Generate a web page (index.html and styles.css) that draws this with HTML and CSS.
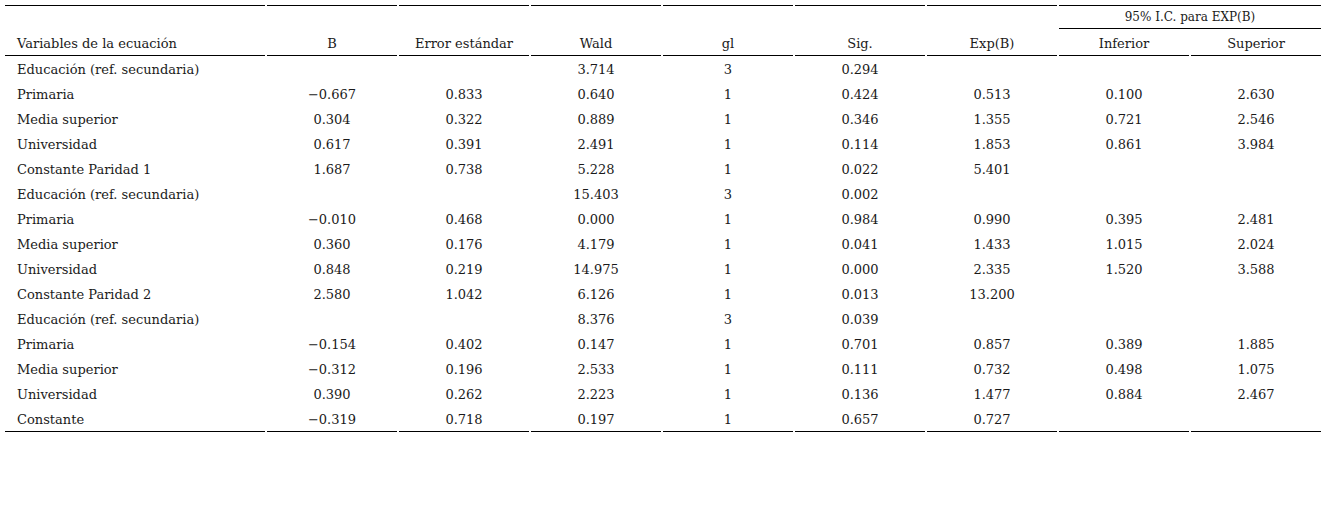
FILE: index.html
```html
<!DOCTYPE html>
<html lang="es">
<head>
<meta charset="utf-8">
<title>Variables de la ecuación</title>
<link rel="stylesheet" href="styles.css">
</head>
<body>
<table class="tbl">
  <colgroup>
    <col class="c-first">
    <col class="c-num"><col class="c-num"><col class="c-num"><col class="c-num">
    <col class="c-num"><col class="c-num"><col class="c-num"><col class="c-num">
  </colgroup>
  <thead>
    <tr class="h1">
      <th class="top"></th><th class="top"></th><th class="top"></th><th class="top"></th>
      <th class="top"></th><th class="top"></th><th class="top"></th>
      <th class="top span" colspan="2">95% I.C. para EXP(B)</th>
    </tr>
    <tr class="h2">
      <th class="lbl">Variables de la ecuación</th>
      <th>B</th><th>Error estándar</th><th>Wald</th><th>gl</th><th>Sig.</th><th>Exp(B)</th>
      <th class="sub">Inferior</th><th class="sub">Superior</th>
    </tr>
  </thead>
  <tbody>
    <tr><td class="lbl">Educación (ref. secundaria)</td><td></td><td></td><td>3.714</td><td>3</td><td>0.294</td><td></td><td></td><td></td></tr>
    <tr><td class="lbl">Primaria</td><td>−0.667</td><td>0.833</td><td>0.640</td><td>1</td><td>0.424</td><td>0.513</td><td>0.100</td><td>2.630</td></tr>
    <tr><td class="lbl">Media superior</td><td>0.304</td><td>0.322</td><td>0.889</td><td>1</td><td>0.346</td><td>1.355</td><td>0.721</td><td>2.546</td></tr>
    <tr><td class="lbl">Universidad</td><td>0.617</td><td>0.391</td><td>2.491</td><td>1</td><td>0.114</td><td>1.853</td><td>0.861</td><td>3.984</td></tr>
    <tr><td class="lbl">Constante Paridad 1</td><td>1.687</td><td>0.738</td><td>5.228</td><td>1</td><td>0.022</td><td>5.401</td><td></td><td></td></tr>
    <tr><td class="lbl">Educación (ref. secundaria)</td><td></td><td></td><td>15.403</td><td>3</td><td>0.002</td><td></td><td></td><td></td></tr>
    <tr><td class="lbl">Primaria</td><td>−0.010</td><td>0.468</td><td>0.000</td><td>1</td><td>0.984</td><td>0.990</td><td>0.395</td><td>2.481</td></tr>
    <tr><td class="lbl">Media superior</td><td>0.360</td><td>0.176</td><td>4.179</td><td>1</td><td>0.041</td><td>1.433</td><td>1.015</td><td>2.024</td></tr>
    <tr><td class="lbl">Universidad</td><td>0.848</td><td>0.219</td><td>14.975</td><td>1</td><td>0.000</td><td>2.335</td><td>1.520</td><td>3.588</td></tr>
    <tr><td class="lbl">Constante Paridad 2</td><td>2.580</td><td>1.042</td><td>6.126</td><td>1</td><td>0.013</td><td>13.200</td><td></td><td></td></tr>
    <tr><td class="lbl">Educación (ref. secundaria)</td><td></td><td></td><td>8.376</td><td>3</td><td>0.039</td><td></td><td></td><td></td></tr>
    <tr><td class="lbl">Primaria</td><td>−0.154</td><td>0.402</td><td>0.147</td><td>1</td><td>0.701</td><td>0.857</td><td>0.389</td><td>1.885</td></tr>
    <tr><td class="lbl">Media superior</td><td>−0.312</td><td>0.196</td><td>2.533</td><td>1</td><td>0.111</td><td>0.732</td><td>0.498</td><td>1.075</td></tr>
    <tr><td class="lbl">Universidad</td><td>0.390</td><td>0.262</td><td>2.223</td><td>1</td><td>0.136</td><td>1.477</td><td>0.884</td><td>2.467</td></tr>
    <tr class="last"><td class="lbl">Constante</td><td>−0.319</td><td>0.718</td><td>0.197</td><td>1</td><td>0.657</td><td>0.727</td><td></td><td></td></tr>
  </tbody>
</table>
</body>
</html>
```
FILE: styles.css
```css
html, body {
  margin: 0;
  padding: 0;
  background: #fff;
}
body {
  font-family: "DejaVu Serif", "Liberation Serif", serif;
  font-size: 13px;
  color: #1a1a1a;
}
.tbl {
  margin: 5px 0 0 3px;
  border-collapse: separate;
  border-spacing: 2px 0;
  table-layout: fixed;
  width: 1320px;
}
.c-first { width: 260px; }
.c-num { width: 130px; }
.tbl th, .tbl td {
  padding: 0;
  font-weight: normal;
  text-align: center;
  white-space: nowrap;
  line-height: 16px;
}
.tbl .lbl {
  text-align: left;
  padding-left: 12px;
}
.h1 th {
  height: 22px;
  vertical-align: middle;
}
.h1 .top {
  border-top: 1px solid #000;
}
.h1 .span {
  border-bottom: 1px solid #000;
  font-size: 12px;
}
.h2 th {
  height: 23px;
  border-bottom: 1px solid #000;
  vertical-align: middle;
  padding-top: 3px;
}
.tbl td {
  height: 22px;
  vertical-align: middle;
  padding-top: 3px;
}
.tbl tr.last td {
  border-bottom: 1px solid #000;
}
```
